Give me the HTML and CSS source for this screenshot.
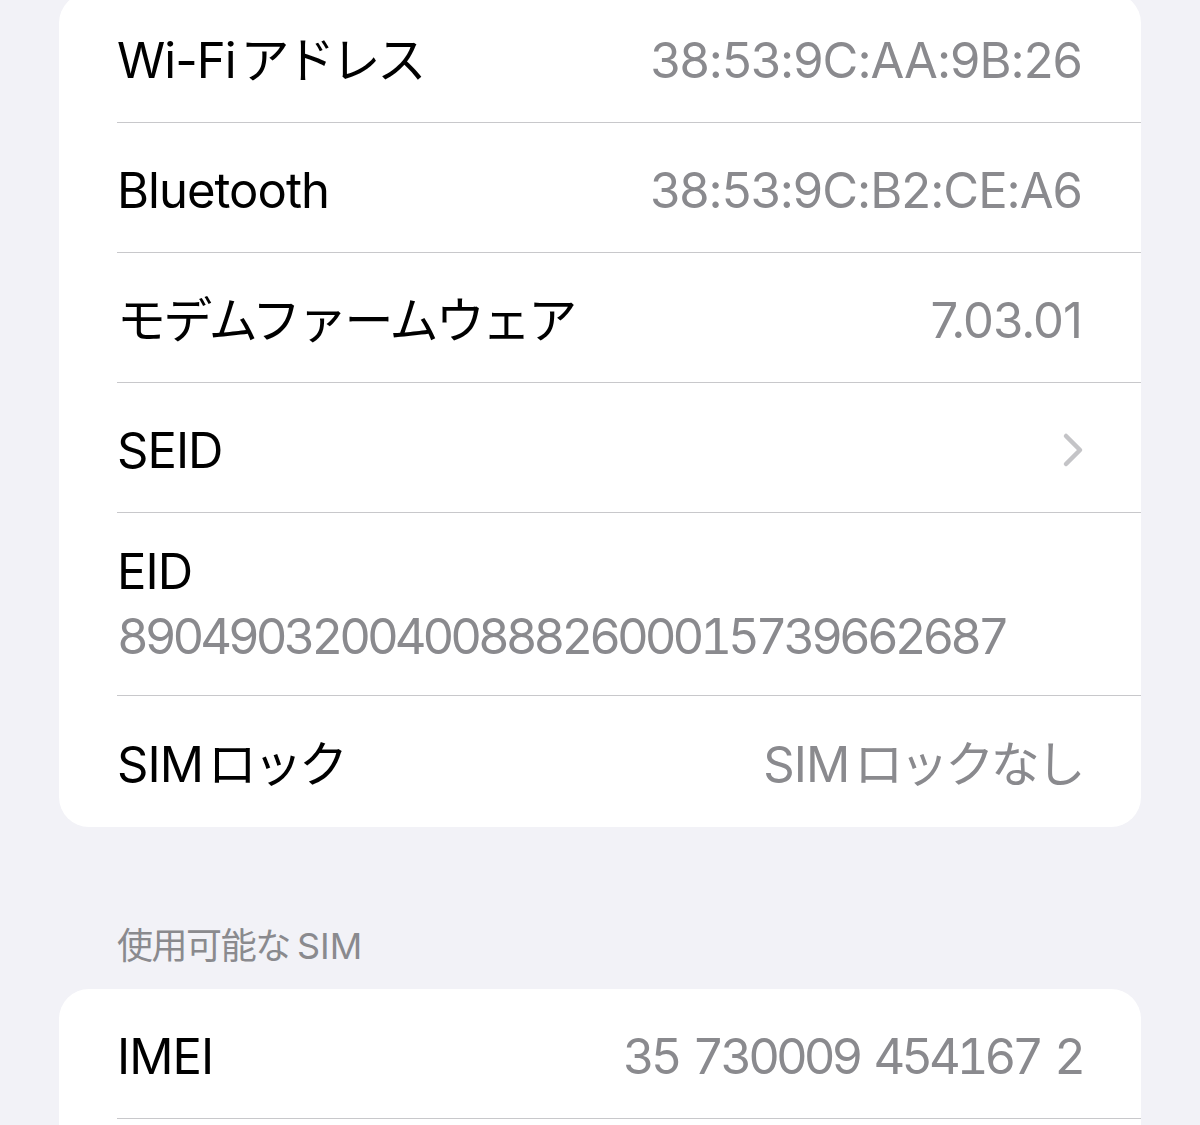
FILE: index.html
```html
<!doctype html>
<html>
  <head>
    <meta charset="UTF-8" />
    <link rel="stylesheet" href="styles.css">
  </head>
  <body>
    <div class="page">
      <div class="card card-top">
        <div class="row">
          <div class="label">Wi-Fi<span class="ja ja-gap">アドレス</span></div>
          <div class="value">38:53:9C:AA:9B:26</div>
        </div>
        <div class="row">
          <div class="label">Bluetooth</div>
          <div class="value">38:53:9C:B2:CE:A6</div>
        </div>
        <div class="row">
          <div class="label"><span class="ja ja-wide">モデムファームウェア</span></div>
          <div class="value">7.03.01</div>
        </div>
        <div class="row">
          <div class="label">SEID</div>
          <svg class="chevron" width="22" height="36" viewBox="0 0 22 36">
            <polyline points="4,4 18,18 4,32" fill="none" stroke="#c4c4c7" stroke-width="4.5" stroke-linecap="round" stroke-linejoin="round" />
          </svg>
        </div>
        <div class="row row-stacked">
          <div class="label">EID</div>
          <div class="value value-mono">89049032004008882600015739662687</div>
        </div>
        <div class="row row-last">
          <div class="label">SIM<span class="ja ja-gap">ロック</span></div>
          <div class="value">SIM<span class="ja ja-gap">ロックなし</span></div>
        </div>
      </div>
      <div class="section-header"><span class="ja">使用可能な</span><span class="ja-gap">SIM</span></div>
      <div class="card">
        <div class="row">
          <div class="label">IMEI</div>
          <div class="value value-mono value-spaced">35 730009 454167 2</div>
        </div>
        <div class="row"></div>
      </div>
    </div>
  </body>
</html>
```

FILE: styles.css
```css
html,
body {
  height: 100%;
}
body {
  background: #f2f2f7;
  color: black;
  font-family: Inter, "Noto Sans CJK JP", sans-serif;
  margin: 0;
  overflow: hidden;
}
.page {
  padding: 0 59px;
}
.card {
  background: white;
  border-radius: 30px;
  overflow: hidden;
}
.card-top {
  margin-top: -7px;
}
.row {
  align-items: center;
  border-bottom: 1px solid #c8c8cb;
  box-sizing: border-box;
  display: flex;
  height: 130px;
  justify-content: space-between;
  margin-left: 58px;
  padding-right: 59px;
  padding-top: 5px;
}
.row:last-child {
  border-bottom: none;
}
.row-last {
  height: 131px;
}
.row-stacked {
  align-items: start;
  flex-direction: column;
  height: 183px;
  justify-content: center;
  padding-top: 0;
}
.label,
.value {
  font-size: 49px;
  letter-spacing: -0.02em;
  line-height: 65px;
  white-space: nowrap;
}
.value {
  color: #8a8a8e;
}
.value-mono {
  font-variant-numeric: tabular-nums;
  letter-spacing: -4px;
}
.value-spaced {
  word-spacing: 5px;
}
.ja {
  letter-spacing: -0.07em;
}
.ja-wide {
  letter-spacing: -0.055em;
}
.ja-gap {
  margin-left: 0.1em;
}
.chevron {
  display: block;
  margin-right: -2px;
}
.section-header {
  color: #8a8a8e;
  font-size: 36px;
  line-height: 50px;
  padding: 94px 0 18px 58px;
}
.section-header .ja {
  letter-spacing: -0.04em;
}
.section-header .ja-gap {
  margin-left: 0.2em;
}
```
